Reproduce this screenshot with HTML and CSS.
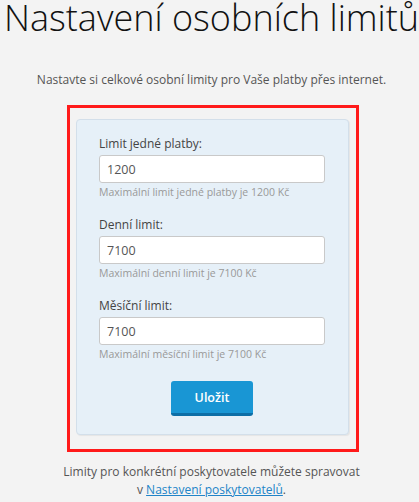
FILE: index.html
```html
<!DOCTYPE html>
<html lang="cs">
<head>
<meta charset="utf-8">
<title>Nastavení osobních limitů</title>
<link rel="stylesheet" href="styles.css">
</head>
<body>
<h1 class="title">Nastavení osobních limitů</h1>
<p class="intro">Nastavte si celkové osobní limity pro Vaše platby přes internet.</p>
<div class="highlight">
  <form class="panel">
    <div class="field">
      <label class="label" for="f1">Limit jedné platby:</label>
      <input class="input" id="f1" type="text" value="1200">
      <div class="hint">Maximální limit jedné platby je 1200 Kč</div>
    </div>
    <div class="field">
      <label class="label" for="f2">Denní limit:</label>
      <input class="input" id="f2" type="text" value="7100">
      <div class="hint">Maximální denní limit je 7100 Kč</div>
    </div>
    <div class="field">
      <label class="label" for="f3">Měsíční limit:</label>
      <input class="input" id="f3" type="text" value="7100">
      <div class="hint">Maximální měsíční limit je 7100 Kč</div>
    </div>
    <div class="actions">
      <button class="btn" type="button">Uložit</button>
    </div>
  </form>
</div>
<p class="footer">Limity pro konkrétní poskytovatele můžete spravovat<br>v <a class="link" href="#">Nastavení poskytovatelů</a>.</p>
</body>
</html>
```
FILE: styles.css
```css
html, body {
  margin: 0;
  padding: 0;
}
body {
  background: #f3f3f3;
  font-family: "Open Sans", "Liberation Sans", sans-serif;
  color: #444;
  padding-left: 4px;
}
.title {
  margin: 0;
  padding-top: 1px;
  font-size: 36px;
  font-weight: 300;
  line-height: 34px;
  color: #111;
  text-align: center;
  white-space: nowrap;
}
.intro {
  margin: 36px 0 0;
  font-size: 12px;
  line-height: 18px;
  color: #555;
  text-align: center;
}
.highlight {
  box-sizing: border-box;
  width: 292px;
  margin: 16px 0 0 63px;
  border: 3px solid #ff1a1a;
  padding: 11px 7px 14px 6px;
}
.panel {
  margin: 0;
  background: #e6f0f8;
  border: 1px solid #d3dfea;
  border-radius: 4px;
  box-shadow: 1px 1px 1px rgba(0, 0, 0, 0.06);
  padding: 15px 23px 18px 22px;
}
.field + .field {
  margin-top: 16px;
}
.label {
  display: block;
  font-size: 12px;
  line-height: 18px;
  color: #444;
  margin-bottom: 2px;
}
.input {
  display: block;
  box-sizing: border-box;
  width: 100%;
  height: 28px;
  margin: 0;
  padding: 0 7px;
  border: 1px solid #c9c9c9;
  border-radius: 3px;
  background: #fff;
  font-family: inherit;
  font-size: 12.5px;
  color: #555;
}
.hint {
  margin-top: 1px;
  font-size: 10.5px;
  line-height: 16px;
  color: #999;
}
.actions {
  display: flex;
  justify-content: center;
  margin-top: 19px;
}
.btn {
  box-sizing: border-box;
  width: 82px;
  height: 35px;
  margin: 0;
  padding: 0;
  border: none;
  border-bottom: 3px solid #0d6ea6;
  border-radius: 3px;
  background: #1996d4;
  color: #fff;
  font-family: inherit;
  font-size: 12.5px;
  font-weight: 600;
}
.footer {
  margin: 11px 0 0;
  font-size: 12px;
  line-height: 18px;
  color: #555;
  text-align: center;
}
.link {
  color: #2184c8;
  text-decoration: underline;
}
```
